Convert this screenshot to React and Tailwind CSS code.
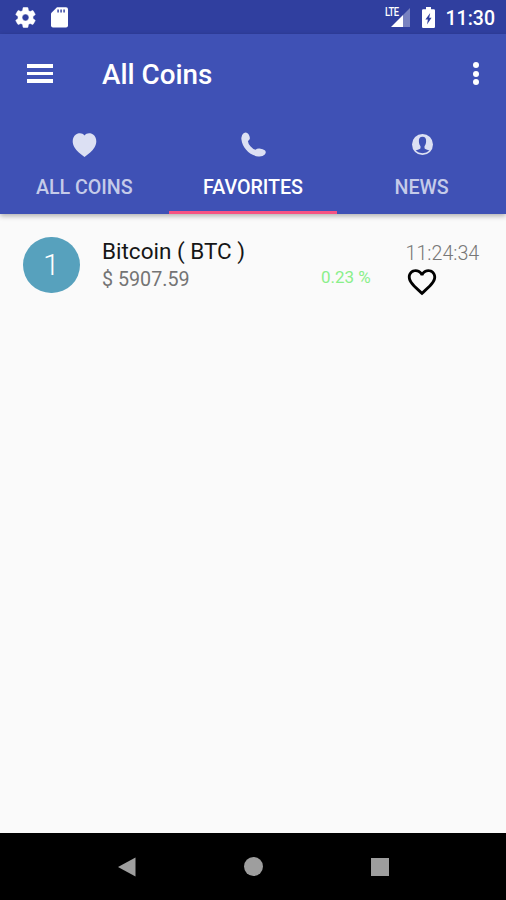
import React from "react";

const GEAR =
  "M19.14 12.94c.04-.3.06-.61.06-.94s-.02-.64-.07-.94l2.03-1.58a.49.49 0 0 0 .12-.61l-1.92-3.32a.488.488 0 0 0-.59-.22l-2.39.96c-.5-.38-1.03-.7-1.62-.94l-.36-2.54a.484.484 0 0 0-.48-.41h-3.84c-.24 0-.43.17-.47.41l-.36 2.54c-.59.24-1.13.57-1.62.94l-2.39-.96c-.22-.08-.47 0-.59.22L2.74 8.87c-.12.21-.08.47.12.61l2.03 1.58c-.05.3-.09.63-.09.94s.02.64.07.94l-2.03 1.58a.49.49 0 0 0-.12.61l1.92 3.32c.12.22.37.29.59.22l2.39-.96c.5.38 1.03.7 1.62.94l.36 2.54c.05.24.24.41.48.41h3.84c.24 0 .44-.17.47-.41l.36-2.54c.59-.24 1.13-.56 1.62-.94l2.39.96c.22.08.47 0 .59-.22l1.92-3.32c.12-.22.07-.47-.12-.61l-2.01-1.58zM12 15.3c-1.8 0-3.3-1.5-3.3-3.3s1.5-3.3 3.3-3.3 3.3 1.5 3.3 3.3-1.5 3.3-3.3 3.3z";

function StatusBar() {
  return (
    <div className="flex h-[34px] shrink-0 items-center bg-[#303f9f] text-white">
      <svg className="ml-[13px] size-[25px]" viewBox="0 0 24 24" fill="currentColor" stroke="currentColor" strokeWidth="0.5">
        <path d={GEAR} />
      </svg>
      <svg className="ml-[13px] h-[21px] w-[17px]" viewBox="0 0 17 21">
        <path d="M6 .3H15Q17 .3 17 2.3V18.6Q17 20.6 15 20.6H2Q0 20.6 0 18.6V6.3Z" fill="#fff" />
        <path d="M6.2 2.6H8V5.6H6.2ZM9.2 2.6H11V5.6H9.2ZM12.2 2.6H14V5.6H12.2Z" fill="#5965b1" />
      </svg>
      <div className="ml-auto flex h-full items-start pt-[7px]">
        <span className="-mr-[8px] h-[10px] w-[14px] origin-left scale-x-[0.78] text-[12px] leading-[11px] font-medium tracking-[-0.5px]">
          LTE
        </span>
        <svg className="mt-[1px] h-[19px] w-[19px]" viewBox="0 0 19 19">
          <path d="M12 7V19H0Z" fill="#fff" />
          <path d="M12 7L19 0V19H12Z" fill="#7882c0" />
        </svg>
        <svg className="ml-[12px] h-[21px] w-[13px]" viewBox="0 0 13 21">
          <path d="M4 0H9V2.2H11.8Q13 2.2 13 3.4V19.8Q13 21 11.8 21H1.2Q0 21 0 19.8V3.4Q0 2.2 1.2 2.2H4Z" fill="#fff" />
          <path d="M8.2 6L3.4 12.6H5.9L5 17.4L9.6 10.8H7.2Z" fill="#303f9f" />
        </svg>
      </div>
      <span className="ml-[10.5px] mt-[3px] w-[60.5px] text-[19.5px] leading-6 font-medium">11:30</span>
    </div>
  );
}

function AppBar() {
  return (
    <div className="flex h-[79px] items-center text-white">
      <div className="ml-[26.5px] flex w-[26.5px] flex-col gap-[4px]">
        <i className="h-[3.5px] bg-white" />
        <i className="h-[3.5px] bg-white" />
        <i className="h-[3.5px] bg-white" />
      </div>
      <h1 className="ml-[49px] mt-[2px] text-[27.8px] leading-8 font-medium whitespace-nowrap">All Coins</h1>
      <div className="mr-[27px] ml-auto flex flex-col gap-[2.4px]">
        <i className="size-[6px] rounded-full bg-white" />
        <i className="size-[6px] rounded-full bg-white" />
        <i className="size-[6px] rounded-full bg-white" />
      </div>
    </div>
  );
}

function Tab({ label, active, children }) {
  return (
    <div className="relative flex flex-1 flex-col items-center pt-[18px]">
      <div className="flex size-[27px] items-center justify-center text-[#dce0f3]">{children}</div>
      <span
        className={
          active
            ? "mt-[18px] text-[19.7px] leading-6 font-medium tracking-[-0.05px] whitespace-nowrap text-white"
            : "mt-[18px] text-[19.7px] leading-6 font-medium tracking-[-0.05px] whitespace-nowrap text-[#c5cbe9]"
        }
      >
        {label}
      </span>
      {active && <i className="absolute inset-x-0 bottom-0 h-[3px] bg-[#f65383]" />}
    </div>
  );
}

function CoinRow() {
  return (
    <div className="flex pt-[22px] pl-[23px]">
      <div className="mt-[0.5px] flex size-[56.5px] items-center justify-center rounded-full bg-[#57a1bd] text-[30px] font-light text-white">
        1
      </div>
      <div className="ml-[22.5px] w-[219px]">
        <div className="mt-[1px] text-[22.5px] leading-7 whitespace-nowrap text-[#161616]">Bitcoin ( BTC )</div>
        <div className="mt-[1px] text-[19.7px] leading-7 text-[#747474]">$ 5907.59</div>
      </div>
      <div className="mt-[29px] w-[84px] text-[17px] leading-6 whitespace-nowrap text-[#8aef8a]">0.23 %</div>
      <div className="w-[80px]">
        <div className="mt-[6px] ml-[0.5px] text-[19.7px] leading-6 font-light text-[#777]">11:24:34</div>
        <svg className="-mt-[1px] size-[34px]" viewBox="0 0 24 24">
          <path
            d="M16.5 3c-1.74 0-3.41.81-4.5 2.09C10.91 3.81 9.24 3 7.5 3 4.42 3 2 5.42 2 8.5c0 3.78 3.4 6.86 8.55 11.54L12 21.35l1.45-1.32C18.6 15.36 22 12.28 22 8.5 22 5.42 19.58 3 16.5 3zm-4.4 15.55l-.1.1-.1-.1C7.14 14.24 4 11.39 4 8.5 4 6.5 5.5 5 7.5 5c1.54 0 3.04.99 3.57 2.36h1.87C13.46 5.99 14.96 5 16.5 5c2 0 3.5 1.5 3.5 3.5 0 2.89-3.14 5.74-7.9 10.05z"
            fill="#000"
          />
        </svg>
      </div>
    </div>
  );
}

export default function App() {
  return (
    <div className="flex h-[900px] w-[506px] flex-col overflow-hidden bg-[#fafafa] font-['Roboto',sans-serif]">
      <StatusBar />
      <header className="h-[180px] shrink-0 bg-[#3f51b5] shadow-[0_2px_5px_rgba(0,0,0,0.3)]">
        <AppBar />
        <nav className="flex h-[101px]">
          <Tab label="ALL COINS">
            <svg className="h-[24px] w-[25px]" viewBox="0 0 25 24" fill="currentColor">
              <path d="M12.5 2.4C10.5-.3 6.5-.4 3.9 1.6C.1 4.5-.2 9.7 2.4 14.2C4.5 17.8 8.7 21.2 12.5 24C16.3 21.2 20.5 17.8 22.6 14.2C25.2 9.7 24.9 4.5 21.1 1.6C18.5-.4 14.5-.3 12.5 2.4Z" />
            </svg>
          </Tab>
          <Tab label="FAVORITES" active>
            <svg className="size-[25px]" viewBox="0 0 25 25">
              <path
                d="M2.6 1.2Q5.4-.7 7.4 1.9Q9.4 5 8.7 7.1Q8 8.5 6.9 9.1Q7.2 12 9.4 14.3Q11.9 17.2 14.5 17.8Q16 16.2 18.5 16.4Q22.1 16.8 24.1 18.5Q25.6 20.5 23.8 22.5Q21.6 24.9 17.4 24.5C8.7 23.5 1.4 15.8.4 7.2Q-.1 3.2 2.6 1.2Z"
                fill="currentColor"
              />
            </svg>
          </Tab>
          <Tab label="NEWS">
            <svg className="ml-[1px] size-[21px] shrink-0" viewBox="0 0 21 21">
              <circle cx="10.5" cy="10.5" r="10.5" fill="currentColor" />
              <path
                d="M10.5 2.8C7.8 2.8 6.7 4.8 6.9 7.6C7 9.5 7.6 11.3 8.5 12.3V14.2C7.8 15.4 5.6 15.5 3.6 16.6Q6.4 19.2 10.5 19.2T17.4 16.6C15.4 15.5 13.2 15.4 12.5 14.2V12.3C13.4 11.3 14 9.5 14.1 7.6C14.3 4.8 13.2 2.8 10.5 2.8Z"
                fill="#3f51b5"
              />
            </svg>
          </Tab>
        </nav>
      </header>
      <main className="flex-1">
        <CoinRow />
      </main>
      <footer className="flex h-[67px] shrink-0 items-center bg-black">
        <svg className="ml-[118px] h-[20px] w-[18px]" viewBox="0 0 18 20">
          <path d="M0 10L17.5 .5V19.5Z" fill="#9e9e9e" />
        </svg>
        <i className="ml-[108px] size-[19px] rounded-full bg-[#9e9e9e]" />
        <i className="ml-[108px] size-[18px] bg-[#9e9e9e]" />
      </footer>
    </div>
  );
}
